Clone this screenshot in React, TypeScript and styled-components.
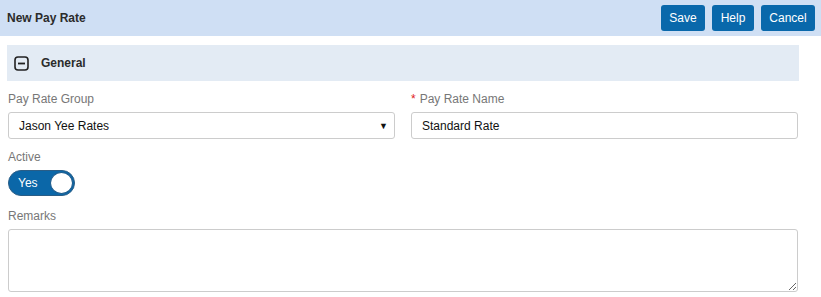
import styled, { createGlobalStyle } from 'styled-components';

const GlobalStyle = createGlobalStyle`
  html, body {
    margin: 0;
    padding: 0;
    background: #ffffff;
    font-family: "Liberation Sans", Arial, sans-serif;
  }
  * {
    box-sizing: border-box;
  }
`;

const Page = styled.div`
  width: 821px;
  height: 297px;
  overflow: hidden;
  background: #ffffff;
`;

const TitleBar = styled.div`
  height: 36px;
  padding: 0 6px 0 7px;
  display: flex;
  align-items: center;
  justify-content: space-between;
  background-color: #cfdff4;
`;

const Title = styled.div`
  color: #2b2b2b;
  font-size: 12px;
  font-weight: 700;
`;

const Actions = styled.div`
  display: flex;
  gap: 7px;
`;

const ActionButton = styled.button<{ $width: number }>`
  width: ${(props) => props.$width}px;
  height: 26px;
  padding: 0;
  border: none;
  border-radius: 3px;
  background-color: #0968ab;
  color: #ffffff;
  font-family: "Liberation Sans", Arial, sans-serif;
  font-size: 12px;
  cursor: pointer;
`;

const Content = styled.div`
  padding: 9px 22px 0 7px;
`;

const SectionHeader = styled.div`
  height: 36px;
  padding: 0 7px;
  display: flex;
  align-items: center;
  gap: 12px;
  background-color: #e3ebf4;
`;

const SectionTitle = styled.div`
  color: #2b2b2b;
  font-size: 12px;
  font-weight: 700;
`;

const Form = styled.div`
  padding: 0 1px;
  display: flex;
  flex-direction: column;
`;

const Row = styled.div`
  display: grid;
  grid-template-columns: 1fr 1fr;
  column-gap: 16px;
`;

const Field = styled.div<{ $offset?: number }>`
  padding-top: ${(props) => props.$offset ?? 0}px;
  display: flex;
  flex-direction: column;
`;

const Label = styled.div`
  height: 31px;
  padding-top: 11px;
  color: #777777;
  font-size: 12px;
  line-height: 14px;
`;

const Required = styled.span`
  color: #e02020;
  margin-right: 4px;
`;

const Box = styled.div<{ $select?: boolean }>`
  height: 27px;
  padding: 0 ${(props) => (props.$select ? 6 : 10)}px 0 10px;
  display: flex;
  align-items: center;
  justify-content: space-between;
  border: 1px solid #cccccc;
  border-radius: 3px;
  color: #111111;
  font-size: 12px;
`;

const Caret = styled.span`
  font-size: 9px;
  color: #111111;
`;

const Toggle = styled.div`
  width: 67px;
  height: 26px;
  padding: 0 1px 0 9px;
  display: flex;
  align-items: center;
  justify-content: space-between;
  border: 1px solid #2a5d86;
  border-radius: 13px;
  background-color: #0b67a8;
  color: #ffffff;
  font-size: 12px;
`;

const Knob = styled.div`
  width: 23px;
  height: 22px;
  border-radius: 50%;
  background: #ffffff;
  border: 1px solid #1c5c8e;
`;

const TextArea = styled.textarea`
  height: 63px;
  width: 100%;
  margin: 0;
  border: 1px solid #cccccc;
  border-radius: 3px;
  font-family: "Liberation Sans", Arial, sans-serif;
  font-size: 12px;
  resize: vertical;
  display: block;
`;

const CollapseIcon = () => (
  <svg width="15" height="15" viewBox="0 0 15 15">
    <rect x="1" y="1" width="13" height="13" rx="3" fill="none" stroke="#222" strokeWidth="1.6" />
    <line x1="4" y1="7.5" x2="11" y2="7.5" stroke="#222" strokeWidth="1.8" />
  </svg>
);

export default function App() {
  return (
    <Page>
      <GlobalStyle />
      <TitleBar>
        <Title>New Pay Rate</Title>
        <Actions>
          <ActionButton $width={44}>Save</ActionButton>
          <ActionButton $width={42}>Help</ActionButton>
          <ActionButton $width={54}>Cancel</ActionButton>
        </Actions>
      </TitleBar>
      <Content>
        <SectionHeader>
          <CollapseIcon />
          <SectionTitle>General</SectionTitle>
        </SectionHeader>
        <Form>
          <Row>
            <Field>
              <Label>Pay Rate Group</Label>
              <Box $select>
                Jason Yee Rates
                <Caret>▼</Caret>
              </Box>
            </Field>
            <Field>
              <Label>
                <Required>*</Required>Pay Rate Name
              </Label>
              <Box>Standard Rate</Box>
            </Field>
          </Row>
          <Field>
            <Label>Active</Label>
            <div>
              <Toggle>
                Yes
                <Knob />
              </Toggle>
            </div>
          </Field>
          <Field $offset={2}>
            <Label>Remarks</Label>
            <TextArea />
          </Field>
        </Form>
      </Content>
    </Page>
  );
}
